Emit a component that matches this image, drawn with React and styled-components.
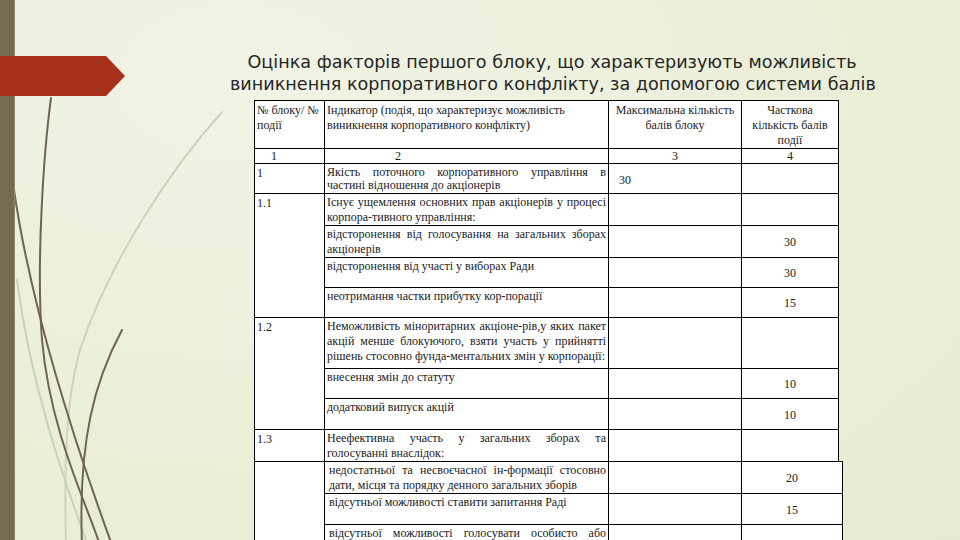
import React from "react";
import styled, { createGlobalStyle } from "styled-components";

const mainRows = [
  {
    num: "1",
    span: 1,
    text: "Якість поточного корпоративного управління в частині відношення до акціонерів",
    max: "30",
    h: 30,
    tight: true,
  },
  {
    num: "1.1",
    span: 4,
    text: "Існує ущемлення основних прав акціонерів у процесі корпора-тивного управління:",
    h: 32,
  },
  { text: "відсторонення від голосування на загальних зборах акціонерів", part: "30", h: 32 },
  { text: "відсторонення від участі у виборах Ради", part: "30", h: 30 },
  { text: "неотримання частки прибутку кор-порації", part: "15", h: 30 },
  {
    num: "1.2",
    span: 3,
    text: "Неможливість міноритарних акціоне-рів,у яких пакет акцій менше блокуючого, взяти участь у прийнятті рішень стосовно фунда-ментальних змін у корпорації:",
    h: 51,
  },
  { text: "внесення змін до статуту", part: "10", h: 30 },
  { text: "додатковий випуск акцій", part: "10", h: 31 },
  {
    num: "1.3",
    span: 1,
    text: "Неефективна участь у загальних зборах та голосуванні внаслідок:",
    h: 31,
  },
];

const tailRows = [
  {
    num: "",
    span: 3,
    text: "недостатньої та несвоєчасної ін-формації стосовно дати, місця та порядку денного загальних зборів",
    part: "20",
    h: 31,
  },
  { text: "відсутньої можливості ставити запитання Раді", part: "15", h: 31 },
  { text: "відсутньої можливості голосувати особисто або", h: 18, last: true },
];

const App = () => {
  const renderRows = (rows, inset) =>
    rows.map((row, i) => (
      <Row key={i} $h={row.h}>
        {row.num !== undefined && <NumCell rowSpan={row.span}>{row.num}</NumCell>}
        <TextCell $tight={row.tight} $inset={inset} $last={row.last}>
          {row.text}
        </TextCell>
        <MaxCell>{row.max}</MaxCell>
        <PartCell>{row.part}</PartCell>
      </Row>
    ));

  return (
    <>
      <GlobalStyle />
      <Slide>
        <Wisps width="260" height="540" viewBox="0 0 260 540">
          <path d="M222 112 C170 170 110 260 80 350 C66 400 64 460 66 545" stroke="#cfd3bc" />
          <path d="M17 280 C30 380 60 470 88 545" stroke="#cdd1bb" />
          <path d="M51 98 C44 150 36 260 42 340 C50 430 85 500 100 545" stroke="#6f6650" />
          <path d="M14 190 C30 300 70 430 112 545" stroke="#6f6650" />
          <path d="M122 330 C95 380 78 440 82 545" stroke="#6f6650" />
        </Wisps>
        <Strip />
        <Banner />
        <Content>
          <Title>
            Оцінка факторів першого блоку, що характеризують можливість
            <br />
            виникнення корпоративного конфлікту, за допомогою системи балів
          </Title>
          <Table $width={584}>
            <colgroup>
              <col style={{ width: 70 }} />
              <col style={{ width: 284 }} />
              <col style={{ width: 133 }} />
              <col style={{ width: 97 }} />
            </colgroup>
            <tbody>
              <Row $h={48}>
                <HeadCell>№ блоку/ № події</HeadCell>
                <HeadCell>
                  Індикатор (подія, що характеризує можливість виникнення корпоративного конфлікту)
                </HeadCell>
                <HeadCell $center>Максимальна кількість балів блоку</HeadCell>
                <HeadCell $center $narrow>Часткова кількість балів події</HeadCell>
              </Row>
              <Row $h={15}>
                <IndexCell $pad={16}>1</IndexCell>
                <IndexCell $pad={70}>2</IndexCell>
                <IndexCell $center>3</IndexCell>
                <IndexCell $center>4</IndexCell>
              </Row>
              {renderRows(mainRows, false)}
            </tbody>
          </Table>
          <Table $width={588} $tail>
            <colgroup>
              <col style={{ width: 70 }} />
              <col style={{ width: 284 }} />
              <col style={{ width: 133 }} />
              <col style={{ width: 101 }} />
            </colgroup>
            <tbody>{renderRows(tailRows, true)}</tbody>
          </Table>
        </Content>
      </Slide>
    </>
  );
};

export default App;

const GlobalStyle = createGlobalStyle`
  html, body {
    margin: 0;
    padding: 0;
  }
  body {
    width: 960px;
    height: 540px;
    overflow: hidden;
    background: #edf0dc;
  }
`;

const Slide = styled.div`
  position: relative;
  width: 960px;
  height: 540px;
  overflow: hidden;
  display: flex;
  background: radial-gradient(ellipse at 25% 15%, #f1f3e4 0%, #ebefd9 55%, #e6ebd0 100%);
`;

const Wisps = styled.svg`
  position: absolute;
  left: 0;
  top: 0;
  fill: none;
  stroke-width: 2;
  stroke-linecap: round;
`;

const Strip = styled.div`
  position: relative;
  width: 14px;
  flex: none;
  background: #756b51;
  border-right: 1px solid #8e866e;
`;

const Banner = styled.div`
  position: absolute;
  left: 0;
  top: 56px;
  width: 125px;
  height: 40px;
  background: #a6301b;
  clip-path: polygon(0 0, 106px 0, 125px 50%, 106px 100%, 0 100%);
`;

const Content = styled.div`
  position: relative;
  display: flex;
  flex-direction: column;
  padding: 51px 0 0 215px;
`;

const Title = styled.h1`
  width: 644px;
  margin: 0 0 5px;
  font-family: "DejaVu Sans", sans-serif;
  font-size: 17.6px;
  font-weight: normal;
  line-height: 22px;
  text-align: center;
  color: #272727;
  white-space: nowrap;
`;

const Table = styled.table`
  width: ${(p) => p.$width}px;
  margin-left: 24px;
  margin-top: ${(p) => (p.$tail ? "-1px" : "0")};
  border-collapse: collapse;
  table-layout: fixed;
  background: #fff;
`;

const Row = styled.tr`
  height: ${(p) => p.$h}px;
`;

const Cell = styled.td`
  border: 1px solid #000;
  padding: 0;
  overflow: hidden;
  font-family: "Liberation Serif", "Times New Roman", serif;
  font-size: 12px;
  color: #1a1a1a;
`;

const HeadCell = styled(Cell)`
  vertical-align: top;
  padding: 2px ${(p) => (p.$narrow ? "8px" : "2px")} 0;
  line-height: 15px;
  text-align: ${(p) => (p.$center ? "center" : "left")};
`;

const IndexCell = styled(Cell)`
  vertical-align: middle;
  line-height: 13px;
  padding-left: ${(p) => p.$pad || 0}px;
  text-align: ${(p) => (p.$center ? "center" : "left")};
`;

const NumCell = styled(Cell)`
  vertical-align: top;
  padding: 2px 2px 0;
  line-height: 15px;
`;

const TextCell = styled(Cell)`
  vertical-align: top;
  padding: ${(p) => (p.$tight ? "2px" : "1px")} 2px 0 ${(p) => (p.$inset ? "4px" : "2px")};
  line-height: ${(p) => (p.$tight ? "13px" : "15px")};
  text-align: justify;
  text-align-last: ${(p) => (p.$last ? "justify" : "auto")};
  white-space: ${(p) => (p.$last ? "nowrap" : "normal")};
`;

const MaxCell = styled(Cell)`
  vertical-align: middle;
  padding: 3px 0 0 10px;
`;

const PartCell = styled(Cell)`
  vertical-align: middle;
  padding-top: 2px;
  text-align: center;
`;
